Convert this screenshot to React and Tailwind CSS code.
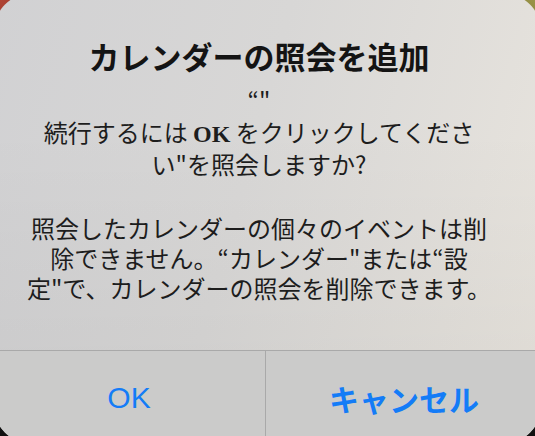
import React from 'react';

const JP = "font-['Noto_Sans_CJK_JP','Noto_Sans',sans-serif]";

const AlertDialog = () => {
  return (
    <div className="relative w-[535px] h-[436px] overflow-hidden bg-[#111]">
      {/* wallpaper peeking through the corners */}
      <div className="absolute left-0 top-0 w-[48px] h-[48px] bg-[radial-gradient(circle_at_0_0,#b04434,#7a2a22)]" />
      <div className="absolute right-0 top-0 w-[48px] h-[48px] bg-[radial-gradient(circle_at_100%_0,#9a9448,#6e6a2c)]" />

      <div className="relative -ml-[7px] -mt-[7px] w-[549px] h-[451px] rounded-[40px] overflow-hidden flex flex-col bg-[linear-gradient(to_bottom,rgba(0,0,0,0)_30%,rgba(0,0,0,0.05)_100%),linear-gradient(105deg,#d1d1d3_0%,#d8d7d6_45%,#e9e5de_100%)]">
        {/* message */}
        <div className={`h-[357px] pt-[45px] pl-[20px] pr-[37px] text-center ${JP}`}>
          <h1 className="text-[31px] leading-[36px] font-bold text-[#141414] whitespace-nowrap">
            カレンダーの照会を追加
          </h1>
          <p className="mt-[11px] text-[24px] leading-[30px] text-[#1d1d1d]">“"</p>
          <p className="mt-[2px] text-[24px] leading-[30px] text-[#1d1d1d] whitespace-nowrap">
            続行するには <b className="font-['Liberation_Serif',serif] font-bold">OK</b> をクリックしてくださ
            <br />
            い"を照会しますか?
          </p>
          <p className="mt-[34px] text-[24px] leading-[30px] text-[#1d1d1d] whitespace-nowrap">
            照会したカレンダーの個々のイベントは削
            <br />
            除できません。“カレンダー"または“設
            <br />
            定"で、カレンダーの照会を削除できます。
          </p>
        </div>

        {/* buttons */}
        <div className="flex-1 flex border-t border-[#a9a9a9] bg-[#cbcbca]">
          <button className="w-[273px] flex items-start justify-center pt-[29px] border-r border-[#a9a9a9] text-[30px] leading-[36px] text-[#147cf7] font-['Liberation_Sans',Arial,sans-serif]">
            OK
          </button>
          <button className={`flex-1 flex items-start justify-center pt-[29px] text-[30px] leading-[36px] font-bold text-[#147cf7] ${JP}`}>
            キャンセル
          </button>
        </div>
      </div>
    </div>
  );
};

export default function App() {
  return <AlertDialog />;
}
